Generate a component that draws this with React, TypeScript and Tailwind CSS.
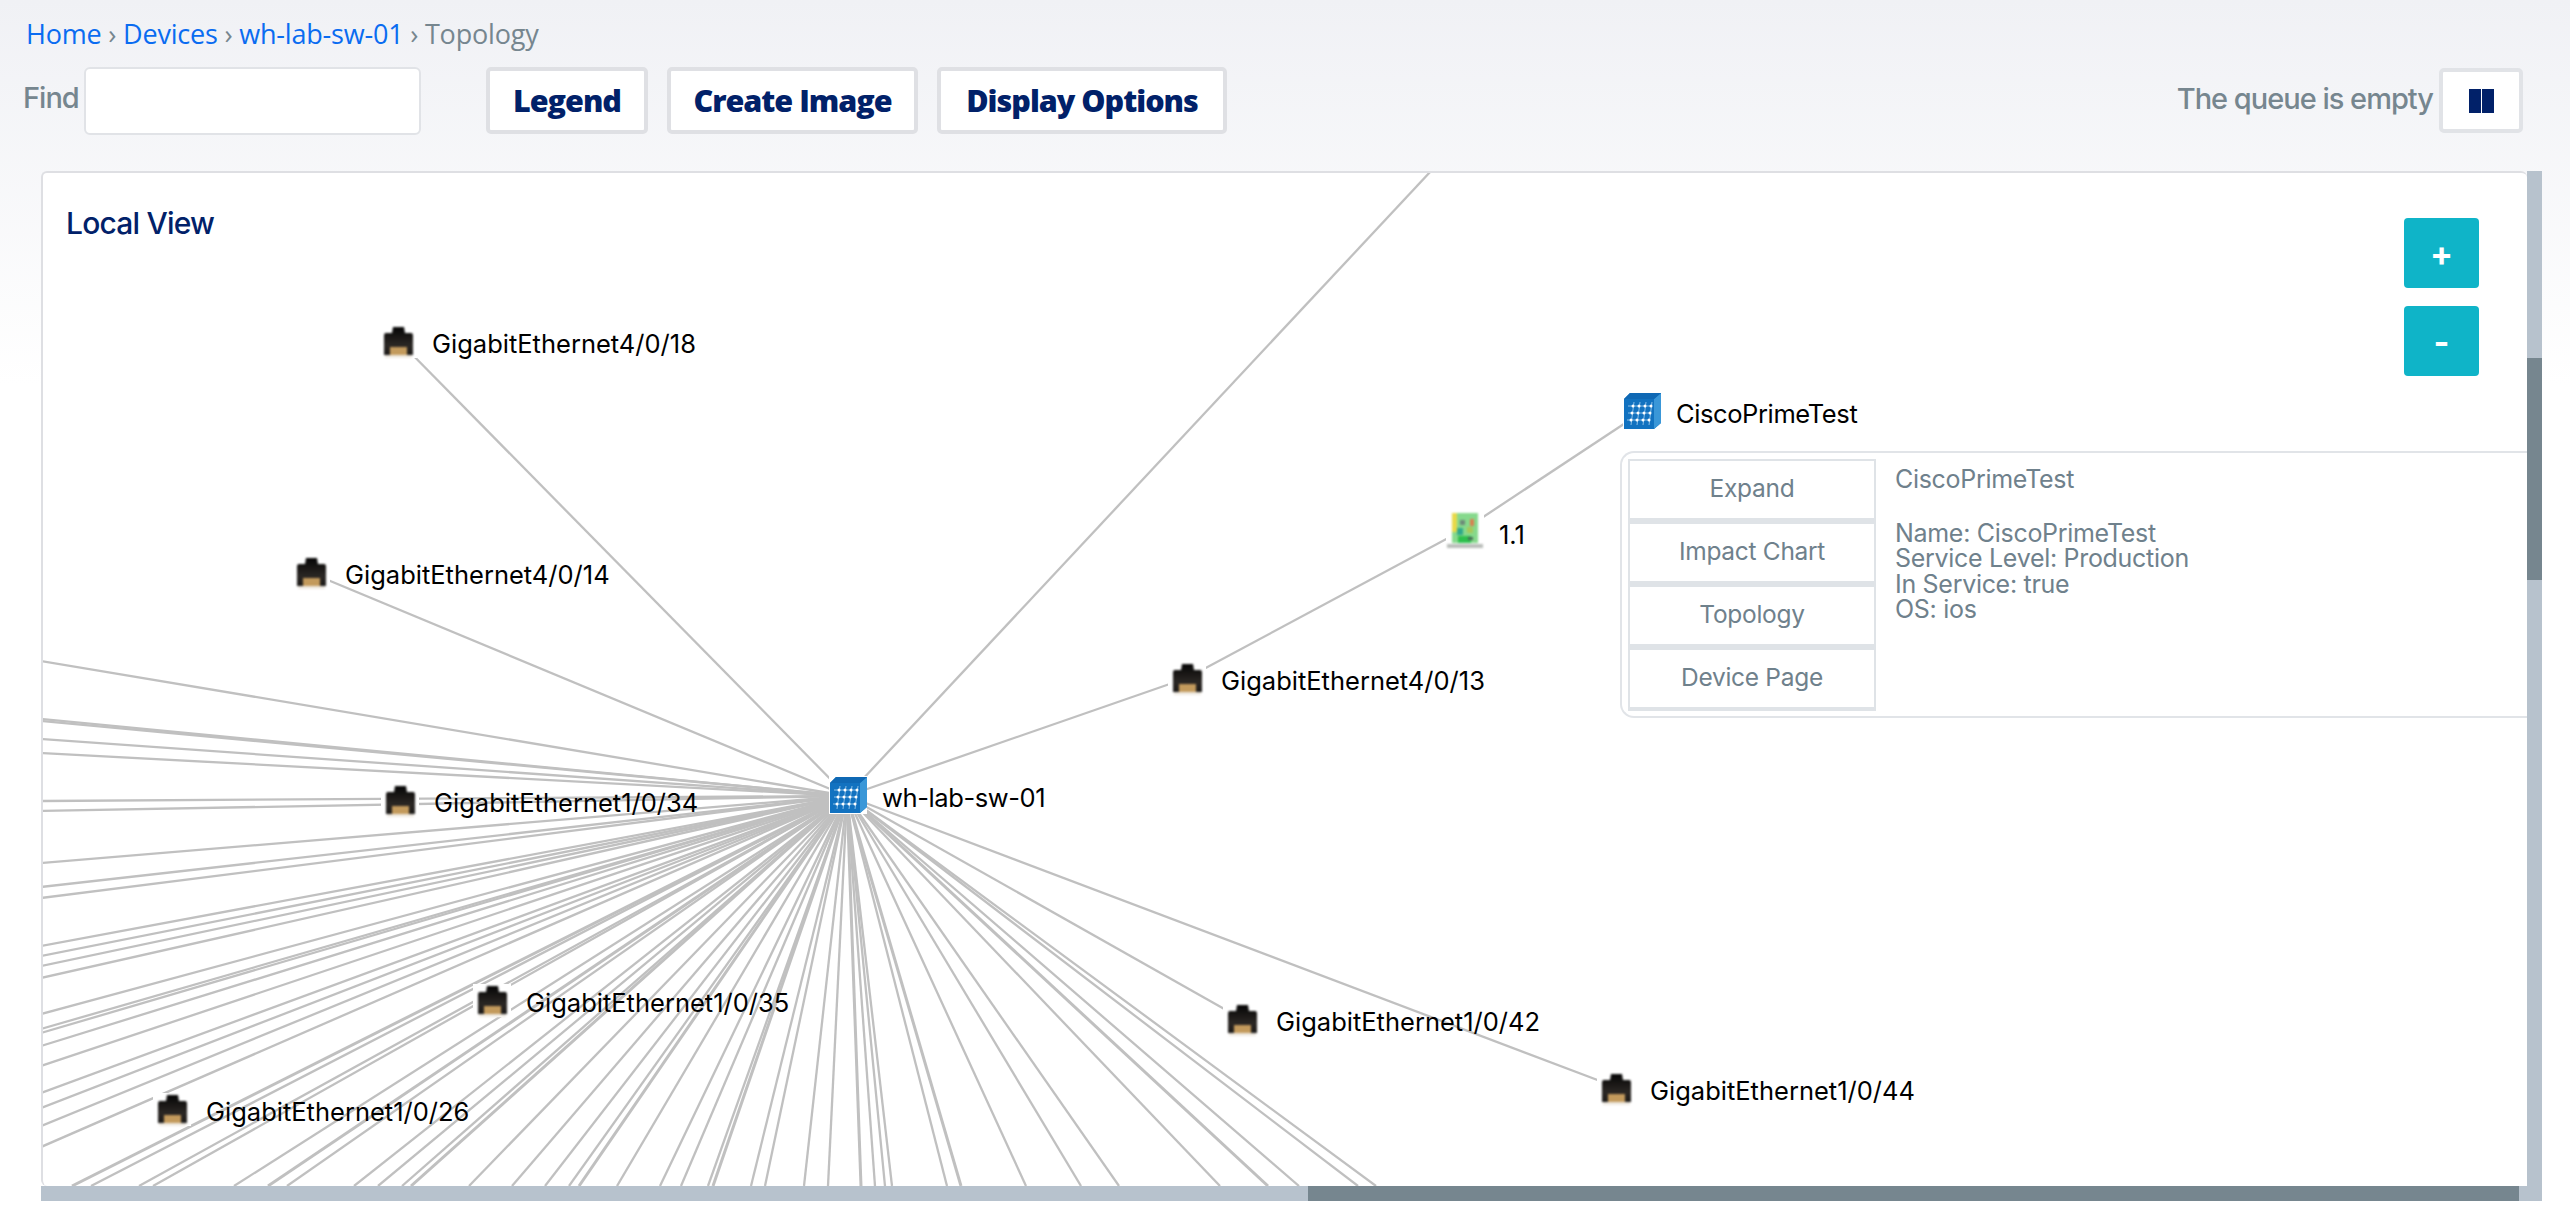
import React from "react";

const HUB = { x: 847, y: 797 };
const LEFT_Y = [662, 720, 722, 740, 754, 802, 812, 864, 888, 899, 947, 957, 967, 979, 1015, 1030, 1034, 1047, 1067, 1094, 1109, 1127, 1148];
const BOTTOM_X = [72, 91, 139, 153, 234, 268, 287, 354, 378, 402, 411, 469, 512, 545, 569, 579, 617, 660, 681, 708, 713, 751, 765, 804, 828, 861, 875, 885, 892, 947, 961, 1026, 1081, 1119, 1220, 1268, 1299, 1358, 1376];
const LINKS: [number, number, number, number][] = [
  [847, 797, 398, 341],
  [847, 797, 311, 574],
  [847, 797, 1431, 172],
  [847, 797, 1187, 679],
  [1187, 679, 1465, 530],
  [1465, 530, 1642, 413],
  [847, 797, 1242, 1020],
  [847, 797, 1616, 1088],
];

function RJ45() {
  return (
    <svg width="33" height="33" viewBox="0 0 33 33" className="block blur-[0.8px]">
      <defs>
        <linearGradient id="rjbody" x1="0" y1="0" x2="0" y2="1">
          <stop offset="0" stopColor="#050505" />
          <stop offset="0.65" stopColor="#2b2724" />
          <stop offset="1" stopColor="#1c1a18" />
        </linearGradient>
      </defs>
      <path d="M11 2h11l1 6h7l1 2v20H2V10l1-2h7z" fill="url(#rjbody)" />
      <rect x="8" y="22" width="17" height="8" fill="#c39a5c" />
      <rect x="3" y="30" width="27" height="3" fill="#efeae2" />
    </svg>
  );
}

function SwitchIcon() {
  return (
    <svg width="38" height="38" viewBox="0 0 38 38" className="block">
      <path d="M1 7 7 1h31v30l-7 6H1z" fill="#1272c0" />
      <path d="M31 7 38 1v30l-7 6z" fill="#3a97d8" />
      <path d="M1 7 7 1h31l-7 6z" fill="#0f68b4" />
      <g stroke="#a9d2f0" strokeWidth="0.8">
        <path d="M5 14h22M5 21h22M4 28h22" />
        <path d="M11 10 8 33M17 10l-3 23M23 10l-3 23M29 10l-3 23" />
      </g>
      <g fill="#ffffff">
        <circle cx="10" cy="14" r="1.5" /><circle cx="16" cy="14" r="1.5" /><circle cx="22" cy="14" r="1.5" /><circle cx="28" cy="14" r="1.5" />
        <circle cx="9" cy="21" r="1.5" /><circle cx="15" cy="21" r="1.5" /><circle cx="21" cy="21" r="1.5" /><circle cx="27" cy="21" r="1.5" />
        <circle cx="8" cy="28" r="1.5" /><circle cx="14" cy="28" r="1.5" /><circle cx="20" cy="28" r="1.5" /><circle cx="26" cy="28" r="1.5" />
      </g>
    </svg>
  );
}

function BoardIcon() {
  return (
    <svg width="38" height="37" viewBox="0 0 38 37" className="block blur-[0.8px]">
      <rect x="6" y="0" width="26" height="30" fill="#86d98c" />
      <rect x="6" y="0" width="5" height="19" fill="#e8d948" />
      <rect x="14" y="7" width="5" height="5" fill="#6d8a78" />
      <rect x="24" y="6" width="4" height="7" fill="#d9804f" />
      <rect x="11" y="15" width="6" height="7" fill="#2fa88a" />
      <rect x="21" y="14" width="6" height="6" fill="#a7c95a" />
      <rect x="12" y="23" width="13" height="7" fill="#2dc04d" />
      <rect x="22" y="24" width="5" height="3" fill="#4a6b58" />
      <rect x="1" y="31" width="36" height="4" fill="#b9bdb9" />
    </svg>
  );
}

function Node({ pos, label, icon, track = "" }: { pos: string; label: string; icon: React.ReactNode; track?: string }) {
  return (
    <div className={`absolute flex items-center ${pos}`}>
      <div className="w-[38px] flex justify-center bg-white">{icon}</div>
      <span className={`ml-[15px] mt-[6px] text-[#000000] text-[25.5px] leading-[30px] whitespace-nowrap ${track}`}>{label}</span>
    </div>
  );
}

function ToolButton({ width, children }: { width: string; children: React.ReactNode }) {
  return (
    <button className={`${width} h-[67px] bg-white border-[4px] border-[#dfe0e4] rounded-[5px] text-[#012169] text-[30.5px] font-extrabold tracking-[-1px] font-['Open_Sans',sans-serif] leading-none`}>
      {children}
    </button>
  );
}

function ActionRow({ children }: { children: React.ReactNode }) {
  return (
    <div className="h-[63px] pb-[3px] flex items-center justify-center border-[2px] border-b-[4px] border-[#dfe3e7] text-[#6f818c] text-[24.5px] tracking-[-0.3px]">
      {children}
    </div>
  );
}

export default function App() {
  return (
    <div className="min-h-screen w-full bg-white font-['Inter',sans-serif]">
      <div className="h-[1202px] bg-gradient-to-b from-[#f0f1f5] to-[#ffffff] to-[32%] bg-no-repeat">
        <nav className="pt-[17px] pl-[26px] h-[67px] text-[27px] leading-[34px] font-['Open_Sans',sans-serif] text-[#76868f] tracking-[-0.2px]">
          <span className="text-[#0a6cf1]">Home</span> › <span className="text-[#0a6cf1]">Devices</span> ›{" "}
          <span className="text-[#0a6cf1]">wh-lab-sw-01</span> › Topology
        </nav>

        <div className="flex items-center h-[67px] pl-[23px] pr-[47px]">
          <label className="-mt-[5px] text-[#76868f] text-[29px] font-medium tracking-[-1px] w-[61px]">Find</label>
          <div className="w-[337px] h-[68px] bg-white border-[2px] border-[#e1e3e7] rounded-[6px]" />
          <div className="ml-[65px] flex gap-[19px]">
            <ToolButton width="w-[162px]">Legend</ToolButton>
            <ToolButton width="w-[251px]">Create Image</ToolButton>
            <ToolButton width="w-[290px]">Display Options</ToolButton>
          </div>
          <div className="ml-auto flex items-center gap-[6px]">
            <span className="-mt-[3px] text-[#76868f] text-[29px] font-medium tracking-[-1px]">The queue is empty</span>
            <button className="w-[84px] h-[65px] bg-white border-[4px] border-[#e1e3e7] rounded-[5px] flex items-center justify-center gap-[1px]">
              <span className="w-[12px] h-[24px] bg-[#012169]" />
              <span className="w-[12px] h-[24px] bg-[#012169]" />
            </button>
          </div>
        </div>

        <div className="mt-[37px] ml-[41px] w-[2501px]">
          <div className="flex h-[1015px]">
            <div className="relative w-[2486px] h-full bg-white overflow-hidden rounded-[6px] border-l-[2px] border-t-[2px] border-[#dedfe3]">
              <svg viewBox="43 174 2484 1013" className="absolute inset-0 w-[2484px] h-[1013px]">
                <g stroke="#c0c0c0" strokeWidth="2.3" fill="none">
                  {LEFT_Y.map((y, i) => (
                    <line key={"l" + i} x1={HUB.x} y1={HUB.y} x2={41} y2={y} />
                  ))}
                  {BOTTOM_X.map((x, i) => (
                    <line key={"b" + i} x1={HUB.x} y1={HUB.y} x2={x} y2={1187} strokeWidth={i % 5 === 0 ? 3 : 2.3} />
                  ))}
                  {LINKS.map(([a, b, c, d], i) => (
                    <line key={"k" + i} x1={a} y1={b} x2={c} y2={d} />
                  ))}
                </g>
              </svg>

              <h2 className="absolute left-[23px] top-[30px] text-[#012169] text-[30px] leading-[40px] font-medium tracking-[-0.8px]">Local View</h2>

              <button className="absolute left-[2361px] top-[45px] w-[75px] h-[70px] rounded-[4px] bg-[#0fb4c8] text-white text-[34px] font-bold flex items-center justify-center">+</button>
              <button className="absolute left-[2361px] top-[133px] w-[75px] h-[70px] rounded-[4px] bg-[#0fb4c8] text-white text-[34px] font-bold flex items-center justify-center">-</button>

              <Node pos="left-[336px] top-[150px]" label="GigabitEthernet4/0/18" icon={<RJ45 />} />
              <Node pos="left-[249px] top-[381px]" label="GigabitEthernet4/0/14" icon={<RJ45 />} />
              <Node pos="left-[1125px] top-[487px]" label="GigabitEthernet4/0/13" icon={<RJ45 />} />
              <Node pos="left-[338px] top-[609px]" label="GigabitEthernet1/0/34" icon={<RJ45 />} />
              <Node pos="left-[430px] top-[809px]" label="GigabitEthernet1/0/35" icon={<RJ45 />} />
              <Node pos="left-[110px] top-[918px]" label="GigabitEthernet1/0/26" icon={<RJ45 />} />
              <Node pos="left-[1180px] top-[828px]" label="GigabitEthernet1/0/42" icon={<RJ45 />} />
              <Node pos="left-[1554px] top-[897px]" label="GigabitEthernet1/0/44" icon={<RJ45 />} />
              <Node pos="left-[786px] top-[603px]" label="wh-lab-sw-01" icon={<SwitchIcon />} track="tracking-[-0.4px]" />
              <Node pos="left-[1403px] top-[340px]" label="1.1" icon={<BoardIcon />} />
              <Node pos="left-[1580px] top-[219px]" label="CiscoPrimeTest" icon={<SwitchIcon />} track="tracking-[-0.4px]" />

              <div className="absolute left-[1577px] right-0 top-[278px] h-[267px] bg-white border-[2px] border-r-0 border-[#e1e4e8] rounded-l-[14px] flex pl-[6px] pt-[6px]">
                <div className="w-[248px] flex flex-col">
                  <ActionRow>Expand</ActionRow>
                  <ActionRow>Impact Chart</ActionRow>
                  <ActionRow>Topology</ActionRow>
                  <ActionRow>Device Page</ActionRow>
                </div>
                <div className="ml-[19px] pt-[8px] text-[#6f818c] text-[25px] leading-[25.5px] tracking-[-0.3px]">
                  <div>CiscoPrimeTest</div>
                  <div className="h-[28px]" />
                  <div>Name: CiscoPrimeTest</div>
                  <div>Service Level: Production</div>
                  <div>In Service: true</div>
                  <div>OS: ios</div>
                </div>
              </div>
            </div>
            <div className="w-[15px] h-full bg-[#b7c2cd] flex flex-col">
              <div className="h-[187px]" />
              <div className="h-[222px] bg-[#76868f]" />
            </div>
          </div>
          <div className="flex h-[15px] bg-[#b7c2cd]">
            <div className="w-[1267px]" />
            <div className="w-[1211px] bg-[#76868f]" />
          </div>
        </div>
      </div>
    </div>
  );
}
